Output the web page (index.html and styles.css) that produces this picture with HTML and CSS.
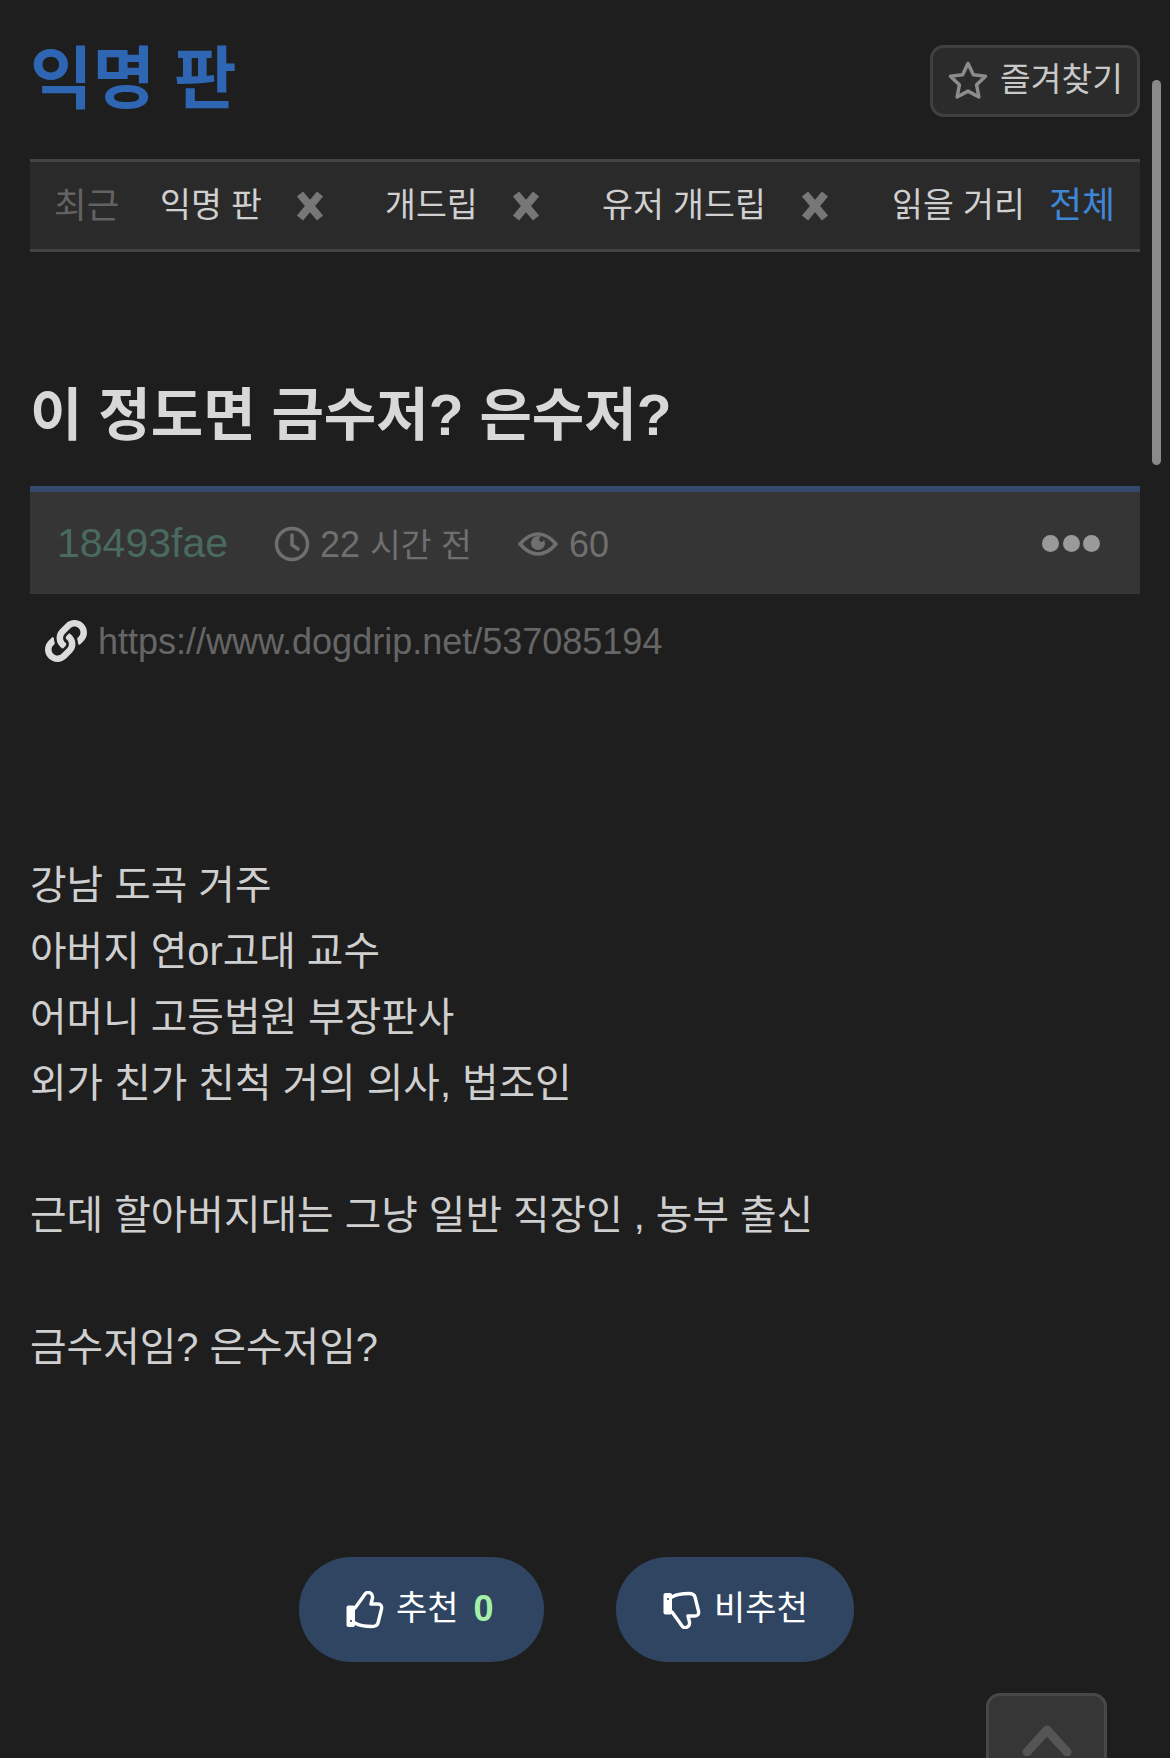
FILE: index.html
```html
<!DOCTYPE html>
<html lang="ko">
<head>
<meta charset="utf-8">
<title>익명 판</title>
<link rel="stylesheet" href="styles.css">
</head>
<body>
<div class="scrollbar"></div>
<header class="head">
  <h1 class="board">익명 판</h1>
  <a class="fav">
    <svg class="star" viewBox="0 0 36 36"><path d="M18 3l4.6 9.6 10.4 1.4-7.6 7.3 1.9 10.4-9.3-5-9.3 5 1.9-10.4L3 14l10.4-1.4z"/></svg>
    <span>즐겨찾기</span>
  </a>
</header>
<nav class="tabs">
  <span class="recent">최근</span>
  <span class="tab t1">익명 판</span><svg class="x" viewBox="0 0 28 32"><path d="M4 4l20 24M24 4L4 28"/></svg>
  <span class="tab t2">개드립</span><svg class="x" viewBox="0 0 28 32"><path d="M4 4l20 24M24 4L4 28"/></svg>
  <span class="tab t3">유저 개드립</span><svg class="x" viewBox="0 0 28 32"><path d="M4 4l20 24M24 4L4 28"/></svg>
  <span class="tab t4">읽을 거리</span>
  <span class="all">전체</span>
</nav>
<h2 class="title">이 정도면 금수저? 은수저?</h2>
<section class="meta">
  <span class="author">18493fae</span>
  <svg class="clock" viewBox="0 0 36 36"><circle cx="18" cy="18" r="15.5"/><path d="M18 9v10l6 4"/></svg>
  <span class="time">22 <span class="hg">시간 전</span></span>
  <svg class="eye" viewBox="0 0 40 24"><path class="lid" d="M2 12C8 5 13 2 20 2s12 3 18 10c-6 7-11 10-18 10S8 19 2 12z"/><circle class="pupil" cx="20" cy="11" r="7"/><circle class="glint" cx="23.5" cy="7.5" r="2.4"/></svg>
  <span class="views">60</span>
  <span class="dots"><i></i><i></i><i></i></span>
</section>
<div class="url">
  <svg class="link" viewBox="0 0 512 512"><path d="M326.612 185.391c59.747 59.809 58.927 155.698.36 214.59-.11.12-.24.25-.36.37l-67.2 67.2c-59.27 59.27-155.699 59.262-214.96 0-59.27-59.26-59.27-155.7 0-214.96l37.106-37.106c9.84-9.84 26.786-3.3 27.294 10.606.648 17.722 3.826 35.527 9.69 52.721 1.986 5.822.567 12.262-3.783 16.612l-13.087 13.087c-28.026 28.026-28.905 73.66-1.155 101.96 28.024 28.579 74.086 28.749 102.325.51l67.2-67.19c28.191-28.191 28.073-73.757 0-101.83-3.701-3.694-7.429-6.564-10.341-8.569a16.037 16.037 0 0 1-6.947-12.606c-.396-10.567 3.348-21.456 11.698-29.806l21.054-21.055c5.521-5.521 14.182-6.199 20.584-1.731a152.482 152.482 0 0 1 20.522 17.197zM467.547 44.449c-59.261-59.262-155.69-59.27-214.96 0l-67.2 67.2c-.12.12-.25.25-.36.37-58.566 58.892-59.387 154.781.36 214.59a152.454 152.454 0 0 0 20.521 17.196c6.402 4.468 15.064 3.789 20.584-1.731l21.054-21.055c8.35-8.35 12.094-19.239 11.698-29.806a16.037 16.037 0 0 0-6.947-12.606c-2.912-2.005-6.64-4.875-10.341-8.569-28.073-28.073-28.191-73.639 0-101.83l67.2-67.19c28.239-28.239 74.3-28.069 102.325.51 27.75 28.3 26.872 73.934-1.155 101.96l-13.087 13.087c-4.35 4.35-5.769 10.79-3.783 16.612 5.864 17.194 9.042 34.999 9.69 52.721.509 13.906 17.454 20.446 27.294 10.606l37.106-37.106c59.271-59.259 59.271-155.699.001-214.959z"/></svg>
  <span>https://www.dogdrip.net/537085194</span>
</div>
<article class="body">
  <p>강남 도곡 거주</p>
  <p>아버지 연or고대 교수</p>
  <p>어머니 고등법원 부장판사</p>
  <p>외가 친가 친척 거의 의사, 법조인</p>
  <p>&nbsp;</p>
  <p>근데 할아버지대는 그냥 일반 직장인 , 농부 출신</p>
  <p>&nbsp;</p>
  <p>금수저임? 은수저임?</p>
</article>
<div class="votes">
  <a class="vote up">
    <svg class="thumb" viewBox="0 0 38 38"><rect class="cuff" x="0.5" y="14.5" width="8.5" height="21.5" rx="2"/><circle class="hole" cx="5" cy="30" r="1.1"/><path d="M9 17L17 6C19 3 19 2 21 1.5C24 1 27 3 26.5 7L25 13L32 13C35 13 36 15 35.5 18L32 32C31 35 29 35.5 26 35.5C20 35.5 14 35 9 32"/></svg>
    <span>추천</span><b class="count">0</b>
  </a>
  <a class="vote down">
    <svg class="thumb" viewBox="0 0 38 38"><rect class="cuff" x="0.5" y="2" width="8.5" height="21.5" rx="2"/><circle class="hole" cx="5" cy="8" r="1.1"/><path d="M9 21L17 32C19 35 19 36 21 36.5C24 37 27 35 26.5 31L25 25L32 25C35 25 36 23 35.5 20L32 6C31 3 29 2.5 26 2.5C20 2.5 14 3 9 6"/></svg>
    <span>비추천</span>
  </a>
</div>
<div class="totop-row">
  <a class="totop"><svg class="chev" viewBox="0 0 50 32"><path d="M5 28L25 6l20 22"/></svg></a>
</div>
</body>
</html>
```
FILE: styles.css
```css
* { box-sizing: border-box; }
html, body { margin: 0; height: 1758px; overflow: hidden; }
body {
  padding: 0 30px;
  background: #1e1e1e;
  font-family: "Liberation Sans", "Noto Sans CJK KR", sans-serif;
  line-height: 1.3;
  position: relative;
}
.scrollbar {
  position: absolute; left: 1152px; top: 80px;
  width: 9px; height: 385px; border-radius: 5px; background: #8a8a8a;
}
.head { display: flex; justify-content: space-between; align-items: flex-start; padding-top: 45px; height: 159px; }
.board { margin: -16px 0 0; font-size: 68px; line-height: 100px; font-weight: 700; color: #2f66b4; }
.fav {
  display: flex; align-items: center; width: 210px; height: 72px;
  padding-left: 14px; gap: 11px;
  background: #2b2b2b; border: 3px solid #404040; border-radius: 14px;
  color: #c8c8c8; font-size: 33.4px;
}
.fav span { padding-bottom: 2px; }
.star { width: 42px; height: 42px; fill: none; stroke: #8c8c8c; stroke-width: 3; stroke-linejoin: round; }
.tabs {
  display: flex; align-items: center; height: 93px;
  background: #2a2a2a; border-top: 3px solid #444; border-bottom: 3px solid #444;
  padding-left: 24px; font-size: 33.6px; color: #d0d0d0;
  white-space: nowrap;
}
.recent, .tab, .all { line-height: 44px; }
.recent { color: #626262; width: 106px; font-size: 35.5px; }
.t1 { width: 136px; }
.t2 { width: 127px; margin-left: 61px; }
.t3 { width: 199px; margin-left: 62px; }
.t4 { width: 157px; margin-left: 63px; }
.x { width: 28px; height: 32px; fill: none; stroke: #777; stroke-width: 8; }
.all { color: #3f86d6; font-size: 36px; }
.title { margin: 0; padding-top: 128px; height: 234px; font-size: 57px; line-height: 70px; font-weight: 700; color: #d8d8d8; white-space: nowrap; }
.meta {
  display: flex; align-items: center; height: 108px; padding: 1px 0 0 27px;
  background: #353535; border-top: 6px solid #34496b;
  color: #6f6f6f; font-size: 36px; line-height: 44px;
}
.author { font-size: 41px; color: #4a6a60; width: 217px; padding-bottom: 2px; }
.clock { width: 36px; height: 36px; fill: none; stroke: #6f6f6f; stroke-width: 3.5; stroke-linecap: round; stroke-linejoin: round; margin-right: 10px; }
.time { width: 198px; padding-top: 4px; }
.hg { font-size: 33.5px; }
.eye { width: 40px; height: 24px; margin-right: 11px; }
.lid { fill: none; stroke: #6f6f6f; stroke-width: 3.5; }
.pupil { fill: #6f6f6f; }
.glint { fill: #353535; }
.views { flex: 1; padding-top: 2px; }
.dots { display: flex; gap: 3.5px; margin-right: 40px; }
.dots i { width: 17px; height: 17px; border-radius: 50%; background: #9a9a9a; }
.url {
  display: flex; align-items: center; gap: 11px; height: 94px; padding: 0 0 0 15px;
  color: #666; font-size: 36px;
}
.url span { padding-top: 2px; }
.link { width: 42px; height: 42px; fill: #dcdcdc; }
.body { margin: 0; padding-top: 164px; color: #cfcfcf; font-size: 39.75px; line-height: 66px; height: 869px; }
.body p { margin: 0; white-space: nowrap; }
.votes { display: flex; padding-left: 269px; gap: 72px; }
.vote {
  display: flex; align-items: center; gap: 12px; height: 105px;
  background: #2f4562; border-radius: 52px; color: #fff; font-size: 34px;
}
.vote span { padding-bottom: 2px; }
.up { width: 245px; padding-left: 47px; }
.down { width: 238px; padding-left: 47px; gap: 13px; }
.thumb { width: 38px; height: 38px; fill: none; stroke: #fff; stroke-width: 3.4; stroke-linejoin: round; stroke-linecap: round; }
.cuff { fill: #fff; stroke: none; }
.hole { fill: #2f4562; stroke: none; }
.count { color: #a5f0a8; font-size: 36px; margin-left: 3px; }
.totop-row { display: flex; justify-content: flex-end; padding: 31px 33px 0 0; }
.totop {
  display: flex; justify-content: center; width: 121px; height: 90px; padding-top: 28px;
  background: #363636; border: 3px solid #484848; border-radius: 14px;
}
.chev { width: 50px; height: 32px; fill: none; stroke: #555; stroke-width: 9; stroke-linecap: round; stroke-linejoin: round; }
```
